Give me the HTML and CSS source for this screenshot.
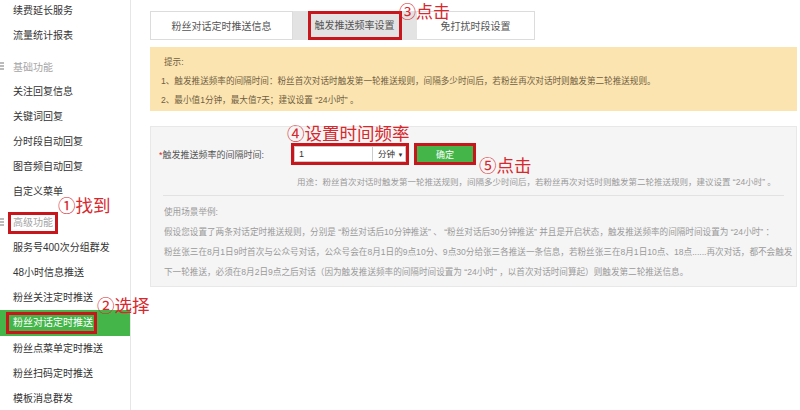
FILE: index.html
```html
<!DOCTYPE html>
<html lang="zh-CN">
<head>
    <meta charset="UTF-8">
    <meta name="viewport" content="width=device-width, initial-scale=1.0">
    <title>粉丝对话定时推送</title>
    <link rel="stylesheet" href="styles.css">
</head>
<body>
    <div class="page">
        <div class="sidebar">
            <ul class="menu">
                <li class="menu-item">续费延长服务</li>
                <li class="menu-item">流量统计报表</li>
                <li class="menu-group"><span class="group-icon"></span>基础功能</li>
                <li class="menu-item">关注回复信息</li>
                <li class="menu-item">关键词回复</li>
                <li class="menu-item">分时段自动回复</li>
                <li class="menu-item">图音频自动回复</li>
                <li class="menu-item">自定义菜单</li>
                <li class="menu-group"><span class="group-icon"></span><span class="mark mark-group">高级功能</span></li>
                <li class="menu-item">服务号400次分组群发</li>
                <li class="menu-item">48小时信息推送</li>
                <li class="menu-item">粉丝关注定时推送</li>
                <li class="menu-item active"><span class="mark mark-active">粉丝对话定时推送</span></li>
                <li class="menu-item">粉丝点菜单定时推送</li>
                <li class="menu-item">粉丝扫码定时推送</li>
                <li class="menu-item">模板消息群发</li>
            </ul>
        </div>

        <div class="main">
            <div class="tabs">
                <div class="tab tab-info">粉丝对话定时推送信息</div>
                <div class="tab tab-freq current"><span class="mark mark-tab">触发推送频率设置</span></div>
                <div class="tab tab-quiet">免打扰时段设置</div>
            </div>

            <div class="tips">
                <div class="tips-title">提示:</div>
                <div>1、触发推送频率的间隔时间：粉丝首次对话时触发第一轮推送规则，间隔多少时间后，若粉丝再次对话时则触发第二轮推送规则。</div>
                <div>2、最小值1分钟，最大值7天；建议设置 “24小时” 。</div>
            </div>

            <div class="panel">
                <div class="form-row">
                    <label class="form-label"><span class="required">*</span>触发推送频率的间隔时间:</label>
                    <div class="input-group mark">
                        <input class="input" type="text" value="1">
                        <div class="unit">分钟 <span class="caret">▼</span></div>
                    </div>
                    <button class="btn mark">确定</button>
                </div>
                <div class="hint">用途：粉丝首次对话时触发第一轮推送规则，间隔多少时间后，若粉丝再次对话时则触发第二轮推送规则，建议设置 “24小时” 。</div>
                <div class="divider"></div>
                <div class="example">
                    使用场景举例:<br>
                    假设您设置了两条对话定时推送规则，分别是 “粉丝对话后10分钟推送” 、 “粉丝对话后30分钟推送” 并且是开启状态，触发推送频率的间隔时间设置为 “24小时” ：<br>
                    粉丝张三在8月1日9时首次与公众号对话，公众号会在8月1日的9点10分、9点30分给张三各推送一条信息，若粉丝张三在8月1日10点、18点......再次对话，都不会触发<br>
                    下一轮推送，必须在8月2日9点之后对话（因为触发推送频率的间隔时间设置为 “24小时” ，以首次对话时间算起）则触发第二轮推送信息。
                </div>
            </div>
        </div>

        <!-- 操作步骤标注 -->
        <span class="note note-1">①找到</span>
        <span class="note note-2">②选择</span>
        <span class="note note-3">③点击</span>
        <span class="note note-4">④设置时间频率</span>
        <span class="note note-5">⑤点击</span>
    </div>
</body>
</html>
```

FILE: styles.css
```css
* {
    box-sizing: border-box;
}
body {
    margin: 0;
    background: #fff;
    font-family: "Liberation Sans", "Noto Sans CJK SC", sans-serif;
    color: #333;
    overflow: hidden;
}
.page {
    position: relative;
    display: flex;
    height: 410px;
}

/* 左侧菜单 */
.sidebar {
    width: 131px;
    flex: none;
    border-right: 1px solid #e6e6e6;
}
.menu {
    list-style: none;
    margin: -2px 0 0;
    padding: 0;
}
.menu-item {
    height: 25px;
    line-height: 25px;
    padding-left: 13px;
    font-size: 10px;
    color: #333;
    white-space: nowrap;
}
.menu-item.active {
    height: 26px;
    line-height: 26px;
    padding-left: 10px;
    background: #44b549;
    color: #fff;
}
.menu-group {
    display: flex;
    align-items: center;
    height: 25px;
    margin-top: 6px;
    font-size: 10px;
    color: #a5a5a5;
}
.group-icon {
    width: 4px;
    height: 9px;
    margin-right: 9px;
    background: repeating-linear-gradient(#bbb 0 2px, transparent 2px 3px);
}

/* 红色标记框 */
.mark {
    outline: 3px solid #c8161d;
}
.mark-group {
    display: inline-block;
    line-height: 12px;
    outline-offset: 2px;
}
.mark-active {
    display: inline-block;
    line-height: 14px;
    padding-left: 3px;
    vertical-align: middle;
    outline-offset: 1px;
}
.mark-tab {
    display: inline-block;
    line-height: 15px;
    outline-offset: 4px;
}

/* 右侧内容 */
.main {
    flex: 1;
    min-width: 0;
    padding: 11px 3px 0 19px;
}
.tabs {
    display: flex;
    height: 29px;
}
.tab {
    display: flex;
    align-items: center;
    justify-content: center;
    border: 1px solid #dcdcdc;
    background: #fff;
    font-size: 10px;
    color: #555;
}
.tab-info {
    width: 143px;
}
.tab-freq {
    width: 124px;
    border-left: none;
}
.tab-quiet {
    width: 118px;
    border-left: none;
}
.tab.current {
    background: #e3e3e3;
    border-color: #e3e3e3;
}

.tips {
    margin-top: 7px;
    padding: 6px 11px 1px;
    background: #fce4b1;
    font-size: 8.6px;
    line-height: 19px;
    color: #6f5f42;
}
.tips-title {
    padding-left: 3px;
}

.panel {
    margin-top: 15px;
    padding: 16px 12px 4px 8px;
    background: #f5f5f5;
    border: 1px solid #e8e8e8;
}
.form-row {
    display: flex;
    align-items: center;
    height: 22px;
}
.form-label {
    width: 132px;
    font-size: 9px;
    color: #555;
}
.required {
    color: #d7282e;
}
.input-group {
    display: flex;
    height: 16px;
    margin-left: 3px;
}
.input {
    width: 79px;
    height: 16px;
    margin: 0;
    padding: 0 4px;
    border: 1px solid #ccc;
    background: #fff;
    font-family: inherit;
    font-size: 9px;
    color: #333;
}
.unit {
    width: 33px;
    height: 16px;
    line-height: 14px;
    padding-left: 5px;
    border: 1px solid #ccc;
    border-left: none;
    background: #fff;
    font-size: 8.5px;
    color: #333;
    white-space: nowrap;
}
.caret {
    font-size: 6px;
}
.btn {
    width: 56px;
    height: 16px;
    margin-left: 11px;
    padding: 0;
    border: none;
    background: #44b549;
    color: #fff;
    font-family: inherit;
    font-size: 9px;
}
.hint {
    margin: 10px 0 0 138px;
    font-size: 8.5px;
    line-height: 14px;
    color: #9a9a9a;
    white-space: nowrap;
}
.divider {
    margin: 6px 0 0 4px;
    border-top: 1px solid #e2e2e2;
}
.example {
    padding: 6px 0 0 5px;
    font-size: 8.6px;
    line-height: 20px;
    color: #9a9a9a;
    white-space: nowrap;
}

/* 步骤说明文字 */
.note {
    position: absolute;
    font-family: "Noto Sans CJK SC", sans-serif;
    font-size: 17.5px;
    line-height: 1.1;
    color: #d7282e;
    white-space: nowrap;
}
.note-1 { left: 58px; top: 195px; }
.note-2 { left: 97px; top: 295px; }
.note-3 { left: 399px; top: 2px; font-size: 17px; }
.note-4 { left: 287px; top: 123px; }
.note-5 { left: 479px; top: 155px; }
```
